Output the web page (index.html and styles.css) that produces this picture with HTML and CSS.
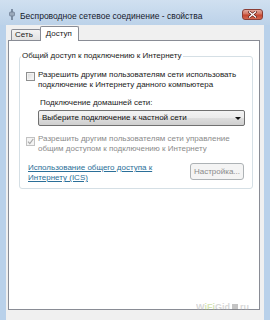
FILE: index.html
```html
<!DOCTYPE html>
<html lang="ru">
<head>
	<meta charset="UTF-8">
	<meta name="viewport" content="width=device-width, initial-scale=1.0">
	<title>Беспроводное сетевое соединение - свойства</title>
	<link rel="stylesheet" href="styles.css">
</head>
<body>
	<div class="window">
		<!-- Title bar -->
		<div class="titlebar">
			<svg class="title-icon" width="6" height="11" viewBox="0 0 6 11">
				<rect x="2" y="0" width="2" height="3" fill="#7d8ea3"/>
				<rect x="0.5" y="3" width="5" height="4" rx="1" fill="#9aa9bb" stroke="#5f6f84" stroke-width="0.6"/>
				<rect x="2.2" y="7" width="1.6" height="4" fill="#6d7d92"/>
			</svg>
			<span class="title-text">Беспроводное сетевое соединение - свойства</span>
			<div class="close-btn">
				<svg width="9" height="7" viewBox="0 0 9 7">
					<path d="M1.5 1 L7.5 6 M7.5 1 L1.5 6" stroke="#5a1a14" stroke-width="2.6" stroke-linecap="square"/>
					<path d="M1.5 1 L7.5 6 M7.5 1 L1.5 6" stroke="#fff" stroke-width="1.4" stroke-linecap="square"/>
				</svg>
			</div>
		</div>

		<!-- Window body -->
		<div class="client">
			<div class="tabs">
				<div class="tab">Сеть</div>
				<div class="tab tab-active">Доступ</div>
			</div>

			<div class="tab-panel">
				<fieldset class="group">
					<legend>Общий доступ к подключению к Интернету</legend>

					<div class="check-row">
						<span class="checkbox"></span>
						<span class="check-label">Разрешить другим пользователям сети использовать<br>подключение к Интернету данного компьютера</span>
					</div>

					<div class="field-label">Подключение домашней сети:</div>
					<div class="select">
						<span>Выберите подключение к частной сети</span>
						<span class="select-arrow"></span>
					</div>

					<div class="check-row disabled">
						<span class="checkbox checked">
							<svg width="7" height="7" viewBox="0 0 7 7">
								<path d="M1 3.6 L2.8 5.6 L6.2 1" fill="none" stroke="#a8a8a8" stroke-width="1.2"/>
							</svg>
						</span>
						<span class="check-label">Разрешить другим пользователям сети управление<br>общим доступом к подключению к Интернету</span>
					</div>

					<div class="link-row">
						<a class="help-link" href="#">Использование общего доступа к<br>Интернету (ICS)</a>
						<button class="btn" disabled>Настройка...</button>
					</div>
				</fieldset>
			</div>
		</div>
	</div>

	<!-- site watermark over the corner -->
	<div class="watermark"><span class="wm-grey">W</span><span class="wm-green">iFi</span><span class="wm-grey">Gid</span><span class="wm-dot"></span><span class="wm-grey">ru</span></div>
</body>
</html>
```

FILE: styles.css
```css
* {
	box-sizing: border-box;
}

body {
	margin: 0;
	width: 270px;
	height: 320px;
	overflow: hidden;
	position: relative;
	background-color: #b9d1ea;
	font-family: "Liberation Sans", Arial, sans-serif;
	font-size: 8px;
	line-height: 10px;
	color: #1a1a1a;
	white-space: nowrap;
}

.window {
	display: flex;
	flex-direction: column;
	height: 320px;
}

/* title bar */
.titlebar {
	flex: none;
	height: 25px;
	display: flex;
	align-items: flex-start;
	padding: 0 7px 0 9px;
	background: linear-gradient(#d0e0f0, #bcd2e9);
}

.title-icon {
	margin-top: 9px;
}

.title-text {
	margin: 11px 0 0 5px;
	font-size: 8.5px;
	color: #16202c;
}

.close-btn {
	margin: 9px 0 0 auto;
	width: 21px;
	height: 11px;
	border: 1px solid #8a3d35;
	border-radius: 3px;
	background: linear-gradient(#e3a99f 0%, #d3735f 45%, #c4452f 55%, #d2664f 100%);
	display: flex;
	align-items: center;
	justify-content: center;
}

/* client area */
.client {
	flex: 1;
	margin: 0 6px;
	padding: 1px 4px 0 2px;
	background-color: #f0f0f0;
}

.tabs {
	display: flex;
	align-items: flex-end;
	height: 14px;
	padding-left: 3px;
	position: relative;
	z-index: 1;
}

.tab {
	height: 11px;
	padding: 0 7px 0 3px;
	border: 1px solid #898c95;
	border-bottom: none;
	border-radius: 2px 2px 0 0;
	background: linear-gradient(#f3f3f3, #e2e2e2);
}

.tab-active {
	height: 15px;
	margin-bottom: -1px;
	margin-left: -1px;
	padding: 2px 6px 0 5px;
	background: #fff;
}

.tab-panel {
	height: 270px;
	border: 1px solid #898c95;
	background-color: #fff;
	padding: 10px 6px 0 10px;
}

/* group box */
.group {
	margin: 0;
	border: 1px solid #d5dfe5;
	border-radius: 3px;
	padding: 9px 7px 5px 6px;
	min-width: 0;
}

.group legend {
	padding: 0 1px;
	margin-left: -5px;
}

.check-row {
	display: flex;
	gap: 3px;
}

.checkbox {
	flex: none;
	width: 9px;
	height: 9px;
	margin-top: 2px;
	border: 1px solid #8e8f8f;
	background: linear-gradient(135deg, #d8d8d8, #fbfbfb);
	box-shadow: inset 0 0 0 1px #f2f2f2;
	display: flex;
	align-items: center;
	justify-content: center;
}

.check-row.disabled {
	margin-top: 8px;
	color: #8b8b8b;
}

.check-row.disabled .checkbox {
	margin-top: 3px;
	border-color: #c2c2c2;
	background: #f4f4f4;
	box-shadow: none;
}

.field-label {
	margin: 8px 0 0 14px;
}

.select {
	height: 16px;
	margin: 2px 0 0 12px;
	padding: 0 3px 0 3px;
	border: 1px solid #707070;
	border-radius: 2px;
	background: linear-gradient(#f3f3f3 0%, #ebebeb 50%, #dddddd 51%, #cfcfcf 100%);
	display: flex;
	align-items: center;
	justify-content: space-between;
	color: #111;
}

.select-arrow {
	width: 0;
	height: 0;
	border-left: 3px solid transparent;
	border-right: 3px solid transparent;
	border-top: 3px solid #111;
}

.link-row {
	margin-top: 9px;
	padding-left: 2px;
	display: flex;
	justify-content: space-between;
	align-items: flex-start;
}

.help-link {
	color: #2b6f98;
	text-decoration: underline;
}

.btn {
	width: 54px;
	height: 17px;
	margin-right: 1px;
	padding: 0;
	border: 1px solid #adb2b5;
	border-radius: 3px;
	background-color: #f4f4f4;
	color: #8a8a8a;
	font: inherit;
}

/* watermark */
.watermark {
	position: absolute;
	left: 196px;
	top: 302px;
	display: flex;
	align-items: center;
	font-size: 9px;
	font-weight: bold;
	line-height: 10px;
	opacity: 0.45;
}

.wm-grey {
	color: #a9a9a9;
}

.wm-green {
	color: #a7c860;
}

.wm-dot {
	width: 6px;
	height: 6px;
	margin: 0 2px;
	background-color: #7e7e7e;
}
```
